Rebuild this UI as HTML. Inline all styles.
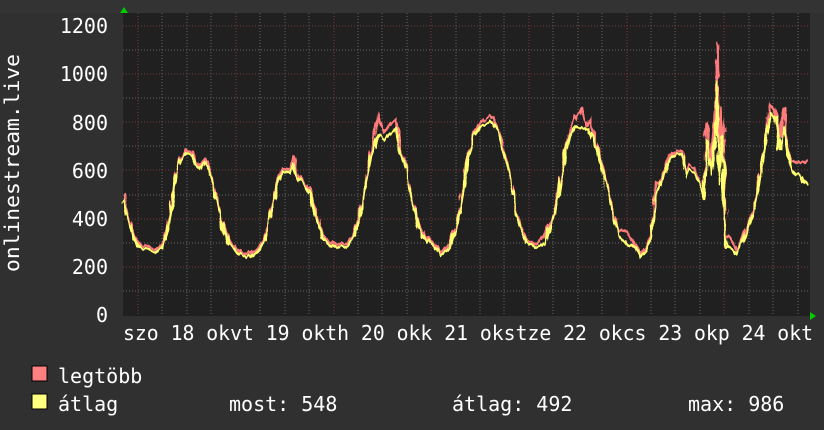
<!DOCTYPE html>
<html><head><meta charset="utf-8"><style>html,body{margin:0;padding:0;background:#303030;}svg{display:block}text{font-family:"DejaVu Sans Mono","Liberation Mono",monospace;fill:#fff;font-size:20px}</style></head>
<body>
<svg width="824" height="430" viewBox="0 0 824 430" xmlns="http://www.w3.org/2000/svg">
<defs>
<filter id="j" x="-5%" y="-20%" width="110%" height="140%">
<feTurbulence type="fractalNoise" baseFrequency="0.25 0.05" numOctaves="2" seed="3" result="n"/>
<feDisplacementMap in="SourceGraphic" in2="n" scale="7" xChannelSelector="R" yChannelSelector="G"/>
</filter>
</defs>
<rect width="824" height="430" fill="#303030"/>
<rect x="0" y="0" width="824" height="13" fill="#333"/>
<rect x="123" y="13" width="687" height="303" fill="#202020"/>
<g stroke="#666" stroke-width="1" stroke-dasharray="1,2">
<line x1="123" y1="291" x2="810" y2="291"/><line x1="123" y1="243" x2="810" y2="243"/><line x1="123" y1="195" x2="810" y2="195"/><line x1="123" y1="146" x2="810" y2="146"/><line x1="123" y1="98" x2="810" y2="98"/><line x1="123" y1="50" x2="810" y2="50"/>
<line x1="162" y1="13" x2="162" y2="316"/><line x1="187" y1="13" x2="187" y2="316"/><line x1="211" y1="13" x2="211" y2="316"/>
<line x1="260" y1="13" x2="260" y2="316"/><line x1="285" y1="13" x2="285" y2="316"/><line x1="309" y1="13" x2="309" y2="316"/>
<line x1="358" y1="13" x2="358" y2="316"/><line x1="382" y1="13" x2="382" y2="316"/><line x1="407" y1="13" x2="407" y2="316"/>
<line x1="456" y1="13" x2="456" y2="316"/><line x1="480" y1="13" x2="480" y2="316"/><line x1="504" y1="13" x2="504" y2="316"/>
<line x1="553" y1="13" x2="553" y2="316"/><line x1="578" y1="13" x2="578" y2="316"/><line x1="602" y1="13" x2="602" y2="316"/>
<line x1="651" y1="13" x2="651" y2="316"/><line x1="675" y1="13" x2="675" y2="316"/><line x1="700" y1="13" x2="700" y2="316"/>
<line x1="749" y1="13" x2="749" y2="316"/><line x1="773" y1="13" x2="773" y2="316"/><line x1="798" y1="13" x2="798" y2="316"/>
</g>
<g stroke="#7a3a3a" stroke-width="1" stroke-dasharray="1,2">
<line x1="123" y1="267" x2="810" y2="267"/><line x1="123" y1="219" x2="810" y2="219"/><line x1="123" y1="170" x2="810" y2="170"/><line x1="123" y1="122" x2="810" y2="122"/><line x1="123" y1="74" x2="810" y2="74"/><line x1="123" y1="26" x2="810" y2="26"/>
<line x1="138" y1="13" x2="138" y2="316"/><line x1="236" y1="13" x2="236" y2="316"/><line x1="334" y1="13" x2="334" y2="316"/><line x1="431" y1="13" x2="431" y2="316"/><line x1="529" y1="13" x2="529" y2="316"/><line x1="627" y1="13" x2="627" y2="316"/><line x1="724" y1="13" x2="724" y2="316"/>
</g>
<g filter="url(#j)">
<polyline fill="none" stroke="#ff7a7a" stroke-width="2.5" transform="translate(0,-3)" points="124,197 130,225 135,240 140,248 148,250 155,252 162,248 168,230 172,205 176,175 180,160 186,152 192,155 196,165 200,168 205,162 210,170 216,195 222,225 228,242 235,250 245,256 252,257 258,252 265,240 272,210 278,180 283,172 290,174 294,158 298,178 304,185 310,195 316,215 322,238 330,245 340,248 348,245 355,235 362,205 368,170 374,140 378,120 384,135 390,128 396,122 400,150 406,170 412,200 418,225 424,238 432,245 440,254 448,248 456,230 462,195 468,160 474,135 480,127 486,121 492,120 497,128 502,145 508,170 514,200 520,230 526,242 535,248 545,238 552,225 558,195 564,160 570,135 576,118 582,112 586,128 590,122 594,140 600,160 606,185 612,210 618,235 626,234 634,246 640,257 646,250 652,235 656,185 660,185 664,175 670,158 676,153 682,155 686,175 690,168 694,170 700,185 704,200 706,125 708,130 710,170 713,140 716,100 717,45 719,160 722,110 726,240 730,240 736,254 742,242 748,230 754,210 760,180 766,140 770,108 776,118 780,140 784,110 788,155 792,165 796,165 800,165 804,165 808,163"/>
<polyline fill="none" stroke="#ffff70" stroke-width="2.5" points="124,200 130,225 135,240 140,248 148,250 155,252 162,248 168,230 172,205 176,175 180,160 186,152 192,155 196,165 200,168 205,162 210,170 216,195 222,225 228,242 235,250 245,256 252,257 258,252 265,240 272,210 278,180 283,172 290,174 294,165 298,178 304,185 310,195 316,215 322,238 330,245 340,248 348,245 355,235 362,205 368,170 374,145 378,135 384,140 390,133 396,130 400,150 406,170 412,200 418,225 424,238 432,245 440,254 448,248 456,230 462,195 468,160 474,135 480,127 486,124 492,122 497,128 502,145 508,170 514,200 520,230 526,242 535,248 545,243 552,225 558,195 564,160 570,135 576,128 582,130 588,128 594,140 600,160 606,185 612,210 618,235 626,244 634,246 640,257 646,250 652,235 656,195 660,185 664,175 670,158 676,153 682,155 686,175 690,170 694,172 700,185 704,200 706,140 708,145 710,175 713,160 716,130 717,80 719,185 722,135 726,245 730,250 736,254 742,242 748,230 754,210 760,180 766,140 770,115 776,118 780,150 784,125 788,155 792,170 796,175 800,175 804,182 808,184"/>
</g>
<polygon points="120,13 128,13 124,7" fill="#0c0"/>
<polygon points="810,312 810,320 816,316" fill="#0c0"/>
<g text-anchor="end">
<text x="108" y="33">1200</text><text x="108" y="81">1000</text><text x="108" y="130">800</text><text x="108" y="178">600</text><text x="108" y="226">400</text><text x="108" y="274">200</text><text x="108" y="322">0</text>
</g>
<text x="123" y="340" textLength="690" lengthAdjust="spacingAndGlyphs">szo 18 okvt 19 okth 20 okk 21 okstze 22 okcs 23 okp 24 okt</text>
<text transform="translate(19,272) rotate(-90)" textLength="218" lengthAdjust="spacingAndGlyphs">onlinestream.live</text>
<rect x="32" y="366" width="15" height="15" fill="#ff8080" stroke="#000" stroke-width="1"/>
<rect x="32" y="394" width="15" height="15" fill="#ffff80" stroke="#000" stroke-width="1"/>
<text x="58" y="383" font-size="21">legtöbb</text>
<text x="58" y="411" font-size="21">átlag</text>
<text x="229" y="411" font-size="21">most: 548</text>
<text x="452" y="411" font-size="21">átlag: 492</text>
<text x="688" y="411" font-size="21">max: 986</text>
</svg>
</body></html>
